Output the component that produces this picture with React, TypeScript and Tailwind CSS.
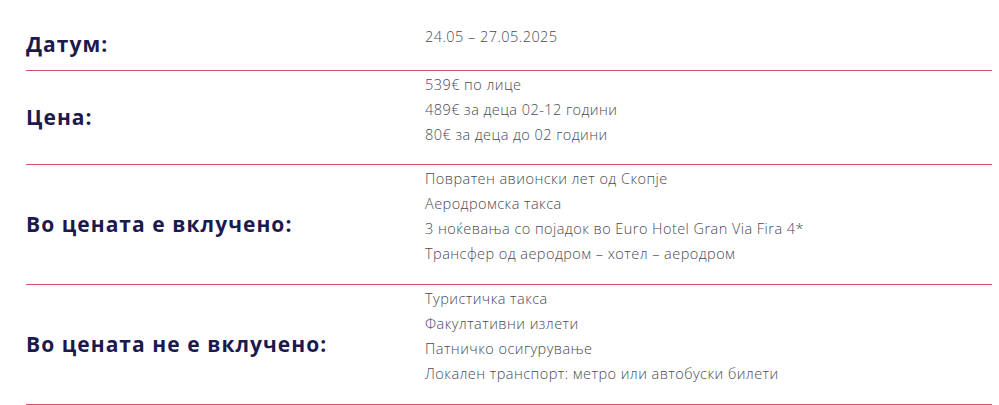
import React from "react";

const rows: { label: string; items: string[]; pad: string }[] = [
  { label: "Датум:", items: ["24.05 – 27.05.2025"], pad: "pt-[4px] pb-[21px]" },
  { label: "Цена:", items: ["539€ по лице", "489€ за деца 02-12 години", "80€ за деца до 02 години"], pad: "pt-[0.5px] pb-[17.5px]" },
  {
    label: "Во цената е вклучено:",
    items: [
      "Повратен авионски лет од Скопје",
      "Аеродромска такса",
      "3 ноќевања со појадок во Euro Hotel Gran Via Fira 4*",
      "Трансфер од аеродром – хотел – аеродром",
    ],
    pad: "pt-[0.5px] pb-[18.5px]",
  },
  {
    label: "Во цената не е вклучено:",
    items: [
      "Туристичка такса",
      "Факултативни излети",
      "Патничко осигурување",
      "Локален транспорт: метро или автобуски билети",
    ],
    pad: "pt-[0.5px] pb-[18.5px]",
  },
];

export default function App() {
  return (
    <div className="w-[999px] h-[405px] bg-white pt-[20px] pl-[26px] overflow-hidden" style={{ fontFamily: '"Open Sans", sans-serif' }}>
      <div className="w-[966px]">
        {rows.map((r, i) => (
          <div key={i} className="flex border-b border-[#d3545f]">
            <div className="w-[399px] flex items-center text-[21px] font-bold text-[#1c1a4d] tracking-[1.05px]">
              {r.label}
            </div>
            <div className={`flex-1 ${r.pad}`}>
              {r.items.map((t, j) => (
                <div key={j} className="text-[14.5px] leading-[25px] font-light text-[#4a4a55] tracking-[0.45px]">
                  {t}
                </div>
              ))}
            </div>
          </div>
        ))}
      </div>
    </div>
  );
}
